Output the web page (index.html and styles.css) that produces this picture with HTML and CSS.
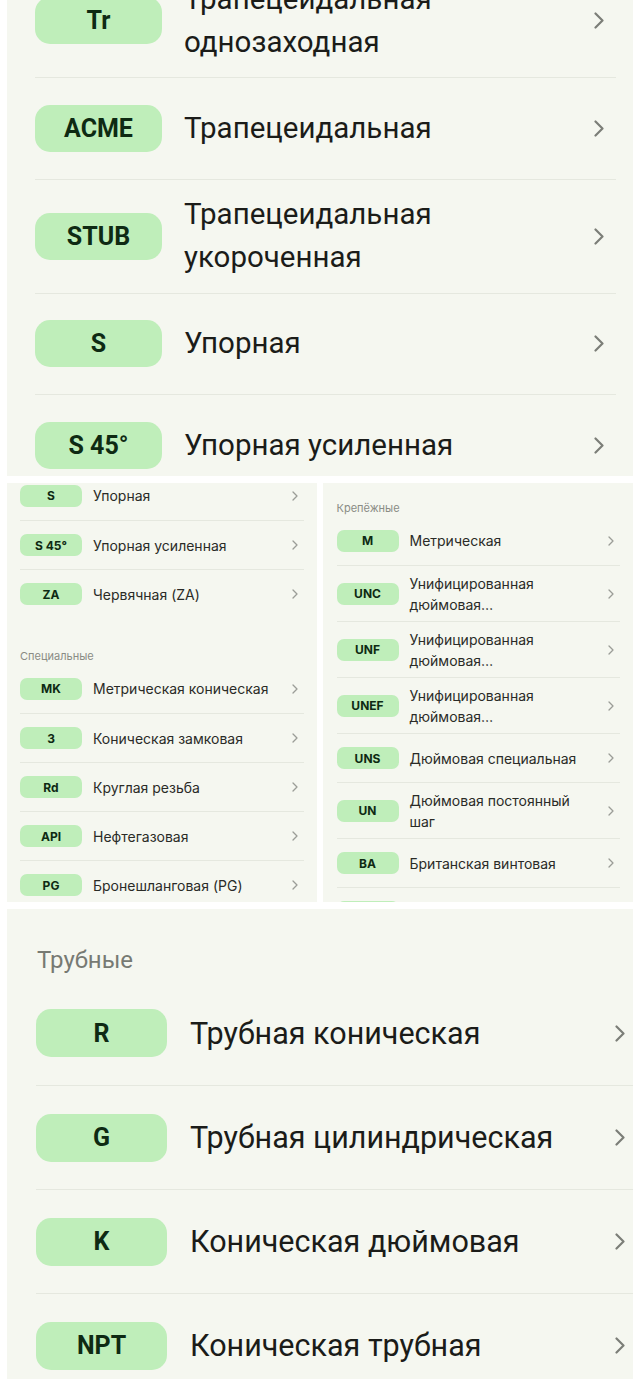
FILE: index.html
```html
<!DOCTYPE html>
<html lang="ru">
<head>
    <meta charset="UTF-8">
    <meta name="viewport" content="width=device-width, initial-scale=1.0">
    <title>Резьбы</title>
    <link rel="stylesheet" href="styles.css">
</head>
<body>
    <div class="page">

        <!-- large scale: trapezoid / thrust -->
        <section class="panel panel-top">
            <div class="list list-top">
                <div class="row">
                    <span class="pill">Tr</span>
                    <span class="name">Трапецеидальная однозаходная</span>
                    <svg class="chev" viewBox="0 0 10 17"><polyline points="1.5,1.5 8.5,8.5 1.5,15.5"/></svg>
                </div>
                <div class="row">
                    <span class="pill">ACME</span>
                    <span class="name">Трапецеидальная</span>
                    <svg class="chev" viewBox="0 0 10 17"><polyline points="1.5,1.5 8.5,8.5 1.5,15.5"/></svg>
                </div>
                <div class="row">
                    <span class="pill">STUB</span>
                    <span class="name">Трапецеидальная укороченная</span>
                    <svg class="chev" viewBox="0 0 10 17"><polyline points="1.5,1.5 8.5,8.5 1.5,15.5"/></svg>
                </div>
                <div class="row">
                    <span class="pill">S</span>
                    <span class="name">Упорная</span>
                    <svg class="chev" viewBox="0 0 10 17"><polyline points="1.5,1.5 8.5,8.5 1.5,15.5"/></svg>
                </div>
                <div class="row">
                    <span class="pill">S 45°</span>
                    <span class="name">Упорная усиленная</span>
                    <svg class="chev" viewBox="0 0 10 17"><polyline points="1.5,1.5 8.5,8.5 1.5,15.5"/></svg>
                </div>
            </div>
        </section>

        <!-- small scale: two columns -->
        <div class="pair">
            <section class="panel panel-small panel-left">
                <div class="list list-left">
                    <div class="row">
                        <span class="pill">S</span>
                        <span class="name">Упорная</span>
                        <svg class="chev" viewBox="0 0 6 10"><polyline points="1,1 5,5 1,9"/></svg>
                    </div>
                    <div class="row">
                        <span class="pill">S 45°</span>
                        <span class="name">Упорная усиленная</span>
                        <svg class="chev" viewBox="0 0 6 10"><polyline points="1,1 5,5 1,9"/></svg>
                    </div>
                    <div class="row">
                        <span class="pill">ZA</span>
                        <span class="name">Червячная (ZA)</span>
                        <svg class="chev" viewBox="0 0 6 10"><polyline points="1,1 5,5 1,9"/></svg>
                    </div>
                </div>
                <h4 class="group-label group-gap">Специальные</h4>
                <div class="list">
                    <div class="row">
                        <span class="pill">MK</span>
                        <span class="name">Метрическая коническая</span>
                        <svg class="chev" viewBox="0 0 6 10"><polyline points="1,1 5,5 1,9"/></svg>
                    </div>
                    <div class="row">
                        <span class="pill">З</span>
                        <span class="name">Коническая замковая</span>
                        <svg class="chev" viewBox="0 0 6 10"><polyline points="1,1 5,5 1,9"/></svg>
                    </div>
                    <div class="row">
                        <span class="pill">Rd</span>
                        <span class="name">Круглая резьба</span>
                        <svg class="chev" viewBox="0 0 6 10"><polyline points="1,1 5,5 1,9"/></svg>
                    </div>
                    <div class="row">
                        <span class="pill">API</span>
                        <span class="name">Нефтегазовая</span>
                        <svg class="chev" viewBox="0 0 6 10"><polyline points="1,1 5,5 1,9"/></svg>
                    </div>
                    <div class="row">
                        <span class="pill">PG</span>
                        <span class="name">Бронешланговая (PG)</span>
                        <svg class="chev" viewBox="0 0 6 10"><polyline points="1,1 5,5 1,9"/></svg>
                    </div>
                </div>
            </section>

            <section class="panel panel-small panel-right">
                <h4 class="group-label">Крепёжные</h4>
                <div class="list">
                    <div class="row">
                        <span class="pill">M</span>
                        <span class="name">Метрическая</span>
                        <svg class="chev" viewBox="0 0 6 10"><polyline points="1,1 5,5 1,9"/></svg>
                    </div>
                    <div class="row">
                        <span class="pill">UNC</span>
                        <span class="name">Унифицированная дюймовая…</span>
                        <svg class="chev" viewBox="0 0 6 10"><polyline points="1,1 5,5 1,9"/></svg>
                    </div>
                    <div class="row">
                        <span class="pill">UNF</span>
                        <span class="name">Унифицированная дюймовая…</span>
                        <svg class="chev" viewBox="0 0 6 10"><polyline points="1,1 5,5 1,9"/></svg>
                    </div>
                    <div class="row">
                        <span class="pill">UNEF</span>
                        <span class="name">Унифицированная дюймовая…</span>
                        <svg class="chev" viewBox="0 0 6 10"><polyline points="1,1 5,5 1,9"/></svg>
                    </div>
                    <div class="row">
                        <span class="pill">UNS</span>
                        <span class="name">Дюймовая специальная</span>
                        <svg class="chev" viewBox="0 0 6 10"><polyline points="1,1 5,5 1,9"/></svg>
                    </div>
                    <div class="row">
                        <span class="pill">UN</span>
                        <span class="name">Дюймовая постоянный шаг</span>
                        <svg class="chev" viewBox="0 0 6 10"><polyline points="1,1 5,5 1,9"/></svg>
                    </div>
                    <div class="row">
                        <span class="pill">BA</span>
                        <span class="name">Британская винтовая</span>
                        <svg class="chev" viewBox="0 0 6 10"><polyline points="1,1 5,5 1,9"/></svg>
                    </div>
                    <div class="row">
                        <span class="pill"></span>
                    </div>
                </div>
            </section>
        </div>

        <!-- large scale: pipe threads -->
        <section class="panel panel-bottom">
            <h4 class="group-label">Трубные</h4>
            <div class="list">
                <div class="row">
                    <span class="pill">R</span>
                    <span class="name">Трубная коническая</span>
                    <svg class="chev" viewBox="0 0 10 17"><polyline points="1.5,1.5 8.5,8.5 1.5,15.5"/></svg>
                </div>
                <div class="row">
                    <span class="pill">G</span>
                    <span class="name">Трубная цилиндрическая</span>
                    <svg class="chev" viewBox="0 0 10 17"><polyline points="1.5,1.5 8.5,8.5 1.5,15.5"/></svg>
                </div>
                <div class="row">
                    <span class="pill">K</span>
                    <span class="name">Коническая дюймовая</span>
                    <svg class="chev" viewBox="0 0 10 17"><polyline points="1.5,1.5 8.5,8.5 1.5,15.5"/></svg>
                </div>
                <div class="row">
                    <span class="pill">NPT</span>
                    <span class="name">Коническая трубная</span>
                    <svg class="chev" viewBox="0 0 10 17"><polyline points="1.5,1.5 8.5,8.5 1.5,15.5"/></svg>
                </div>
            </div>
        </section>

    </div>
</body>
</html>
```

FILE: styles.css
```css
body {
    margin: 0;
    padding: 0;
    background: #ffffff;
    font-family: Roboto, "Liberation Sans", sans-serif;
    color: #1b1c19;
}
.page {
    display: flex;
    flex-direction: column;
    gap: 7px;
    padding: 0 7px;
}
.panel {
    background: #f5f7f0;
    overflow: hidden;
    box-sizing: border-box;
}
.row {
    display: flex;
    align-items: center;
    box-sizing: border-box;
}
.row + .row {
    border-top: 1px solid #e5e8df;
}
.pill {
    flex: none;
    display: flex;
    align-items: center;
    justify-content: center;
    background: #bfeeba;
    color: #0e2a13;
    font-weight: 700;
}
.name {
    flex: 1;
}
.chev {
    flex: none;
    fill: none;
    stroke-linecap: round;
    stroke-linejoin: round;
}
.group-label {
    margin: 0;
    font-weight: 400;
}

/* large panels */
.panel-top {
    height: 476px;
    padding: 0 17px 0 28px;
}
.list-top {
    margin-top: -36px;
}
.panel-top .row,
.panel-bottom .row {
    min-height: 101.5px;
    padding: 13.5px 12px 13.5px 0;
}
.panel-top .pill {
    width: 127px;
    height: 47px;
    border-radius: 15px;
    font-size: 25px;
}
.panel-top .name,
.panel-bottom .name {
    font-size: 29.5px;
    line-height: 43px;
    margin-left: 22px;
}
.panel-top .chev,
.panel-bottom .chev {
    width: 10px;
    height: 17px;
    stroke: #7c7e78;
    stroke-width: 2.2;
}

.panel-bottom {
    height: 470px;
    padding: 36px 0 0 29px;
}
.panel-bottom .group-label {
    font-size: 24px;
    line-height: 30px;
    color: #777a73;
    margin: 0 0 6px 1px;
}
.panel-bottom .row {
    min-height: 104px;
    padding-right: 8px;
}
.panel-bottom .pill {
    width: 131px;
    height: 48px;
    border-radius: 15px;
    font-size: 25px;
}
.panel-bottom .name {
    font-size: 30.5px;
    margin-left: 23px;
}

/* small panels */
.pair {
    display: flex;
    gap: 6px;
}
.panel-small {
    flex: 1;
    height: 419px;
    font-family: Inter, "Noto Sans", sans-serif;
}
.panel-left {
    padding: 0 13px;
}
.panel-right {
    padding: 18px 13px 0 14px;
}
.list-left {
    margin-top: -12px;
}
.panel-small .row {
    min-height: 49px;
    padding: 6.5px 6px 6.5px 0;
}
.panel-small .pill {
    width: 62px;
    height: 22px;
    border-radius: 7px;
    font-size: 12px;
}
.panel-small .name {
    font-size: 14px;
    line-height: 21px;
    margin: 0 16px 0 11px;
    color: #2a2b27;
}
.panel-small .chev {
    width: 6px;
    height: 10px;
    stroke: #9b9d97;
    stroke-width: 1.3;
}
.panel-small .group-label {
    font-size: 11px;
    line-height: 14px;
    color: #8a8c85;
    margin-bottom: 1px;
}
.panel-small .group-gap {
    margin-top: 31px;
}
```
